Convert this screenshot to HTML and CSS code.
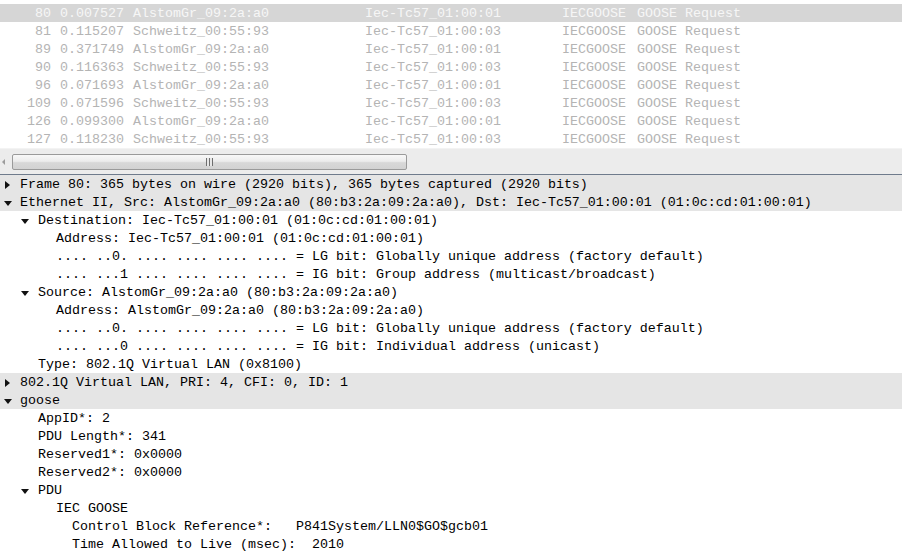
FILE: index.html
```html
<!DOCTYPE html>
<html>
<head>
<meta charset="utf-8">
<link rel="stylesheet" href="styles.css">
</head>
<body>
<div class="app">
  <div class="plist">
    <div class="prow sel"><span class="c-no">80</span><span class="c-time">0.007527</span><span class="c-src">AlstomGr_09:2a:a0</span><span class="c-dst">Iec-Tc57_01:00:01</span><span class="c-proto">IECGOOSE</span><span class="c-info">GOOSE Request</span></div>
    <div class="prow"><span class="c-no">81</span><span class="c-time">0.115207</span><span class="c-src">Schweitz_00:55:93</span><span class="c-dst">Iec-Tc57_01:00:03</span><span class="c-proto">IECGOOSE</span><span class="c-info">GOOSE Request</span></div>
    <div class="prow"><span class="c-no">89</span><span class="c-time">0.371749</span><span class="c-src">AlstomGr_09:2a:a0</span><span class="c-dst">Iec-Tc57_01:00:01</span><span class="c-proto">IECGOOSE</span><span class="c-info">GOOSE Request</span></div>
    <div class="prow"><span class="c-no">90</span><span class="c-time">0.116363</span><span class="c-src">Schweitz_00:55:93</span><span class="c-dst">Iec-Tc57_01:00:03</span><span class="c-proto">IECGOOSE</span><span class="c-info">GOOSE Request</span></div>
    <div class="prow"><span class="c-no">96</span><span class="c-time">0.071693</span><span class="c-src">AlstomGr_09:2a:a0</span><span class="c-dst">Iec-Tc57_01:00:01</span><span class="c-proto">IECGOOSE</span><span class="c-info">GOOSE Request</span></div>
    <div class="prow"><span class="c-no">109</span><span class="c-time">0.071596</span><span class="c-src">Schweitz_00:55:93</span><span class="c-dst">Iec-Tc57_01:00:03</span><span class="c-proto">IECGOOSE</span><span class="c-info">GOOSE Request</span></div>
    <div class="prow"><span class="c-no">126</span><span class="c-time">0.099300</span><span class="c-src">AlstomGr_09:2a:a0</span><span class="c-dst">Iec-Tc57_01:00:01</span><span class="c-proto">IECGOOSE</span><span class="c-info">GOOSE Request</span></div>
    <div class="prow"><span class="c-no">127</span><span class="c-time">0.118230</span><span class="c-src">Schweitz_00:55:93</span><span class="c-dst">Iec-Tc57_01:00:03</span><span class="c-proto">IECGOOSE</span><span class="c-info">GOOSE Request</span></div>
  </div>
  <div class="hscroll">
    <span class="arrow-left"></span>
    <div class="thumb"><span class="grip"></span></div>
  </div>
  <div class="tree">
    <div class="trow top l1"><span class="tw right"></span><span class="txt">Frame 80: 365 bytes on wire (2920 bits), 365 bytes captured (2920 bits)</span></div>
    <div class="trow top l1"><span class="tw down"></span><span class="txt">Ethernet II, Src: AlstomGr_09:2a:a0 (80:b3:2a:09:2a:a0), Dst: Iec-Tc57_01:00:01 (01:0c:cd:01:00:01)</span></div>
    <div class="trow l2"><span class="tw down"></span><span class="txt">Destination: Iec-Tc57_01:00:01 (01:0c:cd:01:00:01)</span></div>
    <div class="trow l3"><span class="txt">Address: Iec-Tc57_01:00:01 (01:0c:cd:01:00:01)</span></div>
    <div class="trow l3"><span class="txt">.... ..0. .... .... .... .... = LG bit: Globally unique address (factory default)</span></div>
    <div class="trow l3"><span class="txt">.... ...1 .... .... .... .... = IG bit: Group address (multicast/broadcast)</span></div>
    <div class="trow l2"><span class="tw down"></span><span class="txt">Source: AlstomGr_09:2a:a0 (80:b3:2a:09:2a:a0)</span></div>
    <div class="trow l3"><span class="txt">Address: AlstomGr_09:2a:a0 (80:b3:2a:09:2a:a0)</span></div>
    <div class="trow l3"><span class="txt">.... ..0. .... .... .... .... = LG bit: Globally unique address (factory default)</span></div>
    <div class="trow l3"><span class="txt">.... ...0 .... .... .... .... = IG bit: Individual address (unicast)</span></div>
    <div class="trow l2"><span class="txt">Type: 802.1Q Virtual LAN (0x8100)</span></div>
    <div class="trow top l1"><span class="tw right"></span><span class="txt">802.1Q Virtual LAN, PRI: 4, CFI: 0, ID: 1</span></div>
    <div class="trow top l1"><span class="tw down"></span><span class="txt">goose</span></div>
    <div class="trow l2"><span class="txt">AppID*: 2</span></div>
    <div class="trow l2"><span class="txt">PDU Length*: 341</span></div>
    <div class="trow l2"><span class="txt">Reserved1*: 0x0000</span></div>
    <div class="trow l2"><span class="txt">Reserved2*: 0x0000</span></div>
    <div class="trow l2"><span class="tw down"></span><span class="txt">PDU</span></div>
    <div class="trow l3"><span class="txt">IEC GOOSE</span></div>
    <div class="trow l4"><span class="txt">Control Block Reference*:   P841System/LLN0$GO$gcb01</span></div>
    <div class="trow l4"><span class="txt">Time Allowed to Live (msec):  2010</span></div>
  </div>
</div>
</body>
</html>
```

FILE: styles.css
```css
html, body {
  margin: 0;
  padding: 0;
  background: #ffffff;
}
body {
  font-family: "Liberation Mono", "DejaVu Sans Mono", monospace;
  font-size: 13.33px;
  overflow: hidden;
}
.app {
  width: 902px;
  height: 553px;
  display: flex;
  flex-direction: column;
}
.plist {
  padding-top: 4px;
  background: #ffffff;
}
.prow {
  display: grid;
  grid-template-columns: 59px 74px 232px 197px 75px 1fr;
  box-sizing: border-box;
  height: 18px;
  padding-top: 2px;
  line-height: 16px;
  color: #b4b4b4;
  white-space: pre;
}
.prow.sel {
  background: #d6d6d6;
  color: #f6f6f6;
}
.c-no {
  text-align: right;
  padding-right: 8px;
}
.c-time { padding-left: 1px; }
.hscroll {
  height: 25px;
  background: #ececec;
  border-top: 1px solid #f3f3f3;
  border-bottom: 1px solid #6f7b8c;
  display: flex;
  align-items: center;
}
.arrow-left {
  width: 0;
  height: 0;
  border-top: 3px solid transparent;
  border-bottom: 3px solid transparent;
  border-right: 3px solid #9c9c9c;
  margin-left: 2px;
  margin-right: 7px;
}
.thumb {
  width: 393px;
  height: 14px;
  border: 1px solid #9a9a9a;
  border-radius: 2px;
  background: linear-gradient(#f8f8f8 0%, #ececec 45%, #d8d8d8 55%, #d2d2d2 100%);
  display: flex;
  align-items: center;
  justify-content: center;
}
.grip {
  width: 7px;
  height: 8px;
  background: repeating-linear-gradient(90deg, #6e6e6e 0 1px, #e6e6e6 1px 3px);
}
.tree {
  flex: 1;
}
.trow {
  box-sizing: border-box;
  height: 18px;
  padding-top: 2px;
  line-height: 16px;
  color: #000000;
  white-space: pre;
  display: flex;
  align-items: center;
  position: relative;
}
.trow.top { background: #e5e5e5; }
.l1 { padding-left: 20px; }
.l2 { padding-left: 38px; }
.l3 { padding-left: 56px; }
.l4 { padding-left: 72px; }
.tw {
  position: absolute;
  width: 0;
  height: 0;
}
.l1 .tw.right { left: 5px; }
.l1 .tw.down { left: 4px; }
.l2 .tw.down { left: 21px; }
.tw.right {
  top: 6px;
  border-top: 4px solid transparent;
  border-bottom: 4px solid transparent;
  border-left: 5px solid #111111;
}
.tw.down {
  top: 8px;
  border-left: 4px solid transparent;
  border-right: 4px solid transparent;
  border-top: 5px solid #111111;
}
```
